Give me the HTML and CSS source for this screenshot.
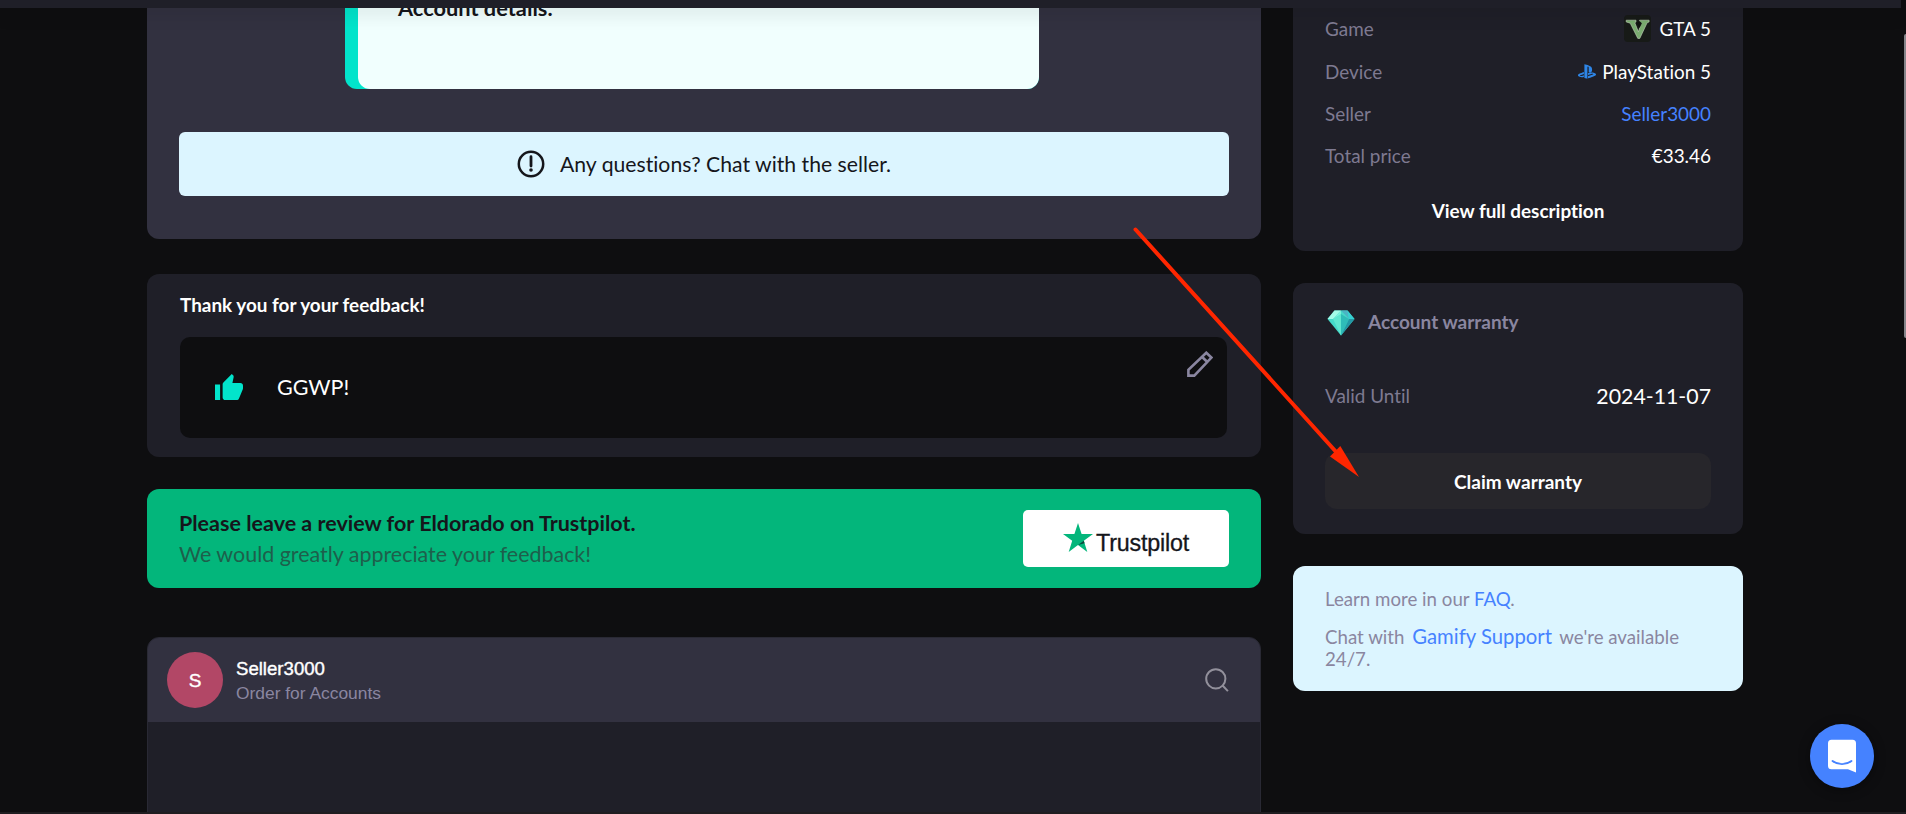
FILE: index.html
```html
<!DOCTYPE html>
<html lang="en">
<head>
<meta charset="utf-8">
<title>Order details</title>
<link rel="stylesheet" href="styles.css">
</head>
<body>
<header class="topbar"></header>
<div class="layout">
  <main class="main">
    <section class="card order">
      <div class="details"><span class="details-title">Account details.</span></div>
      <div class="notice">
        <svg width="28" height="28" viewBox="0 0 28 28" fill="none" stroke="#15161b" stroke-width="2.5"><circle cx="14" cy="14" r="12.2"/><path d="M14 6.7v9.3" stroke-width="2.8" stroke-linecap="round"/><circle cx="14" cy="20" r="1.8" fill="#15161b" stroke="none"/></svg>
        <span class="notice-text">Any questions? Chat with the seller.</span>
      </div>
    </section>

    <section class="card feedback">
      <h2 class="feedback-title">Thank you for your feedback!</h2>
      <div class="comment">
        <svg class="thumb" width="28" height="26" viewBox="1 1 22 20" preserveAspectRatio="none" fill="#02e4cb"><path d="M1 21h4V9H1v12zm22-11c0-1.100-.9-2-2-2h-6.310l.95-4.570.03-.32c0-.41-.17-.79-.44-1.060L14.170 1 7.590 7.590C7.220 7.950 7 8.450 7 9v10c0 1.100.9 2 2 2h9c.83 0 1.540-.5 1.840-1.220l3.020-7.050c.09-.23.14-.47.14-.73v-2z"/></svg>
        <span class="comment-text">GGWP!</span>
        <svg class="pencil" width="26" height="26" viewBox="0 0 26 26" fill="none" stroke="#8a86a0" stroke-width="2.600"><path d="M1.400 24.600v-5.800L19.300 1.700l5.100 4.900L7.300 24.600zM14.900 5.700l5.400 5.300"/></svg>
      </div>
    </section>

    <section class="card review">
      <div>
        <p class="review-title">Please leave a review for Eldorado on Trustpilot.</p>
        <p class="review-sub">We would greatly appreciate your feedback!</p>
      </div>
      <a class="trustpilot">
        <svg width="30" height="29" viewBox="0 0 30 29"><path fill="#03b67b" d="M15 0l3.600 11H30l-9.200 6.800L24.300 29 15 22l-9.300 7 3.500-11.200L0 11h11.400z"/><path fill="#0b4a3c" d="M21.600 20.300l-.8-2.500L15 22z"/></svg>
        <span class="trustpilot-name">Trustpilot</span>
      </a>
    </section>

    <section class="chat">
      <div class="chat-head">
        <span class="avatar">S</span>
        <div class="chat-id">
          <span class="chat-name">Seller3000</span>
          <span class="chat-sub">Order for Accounts</span>
        </div>
        <svg class="search" width="24" height="24" viewBox="0 0 24 24" fill="none" stroke="#92909b" stroke-width="2"><circle cx="10.800" cy="10.800" r="9.600"/><path d="M17.300 17.300l5.600 5.800"/></svg>
      </div>
    </section>
  </main>

  <aside class="side">
    <section class="card summary">
      <div class="row tall"><span class="label">Game</span>
        <span class="value">
          <svg class="gta" width="27" height="27" viewBox="0 0 27 27"><rect width="27" height="27" rx="4" fill="#171a17"/><path d="M2.200 5.200H12v1.700l-1.200.9 3.600 9 2.900-9-1.700-.9V5.200h9.500v1.700l-2 .9-7.300 15.600h-2L6.200 8.200l-4-1.300z" fill="#7aac70" stroke="#c3d2ba" stroke-width=".6"/><path d="M12.500 8.200l3-2.200 2.400 2.200-2.300 4.800z" fill="#101310"/></svg>
          <span>GTA 5</span></span></div>
      <div class="row tall"><span class="label">Device</span>
        <span class="value">
          <svg class="ps" width="18" height="15" viewBox="0 0 18 15" fill="#2e86e8"><path d="M6.400 0.300v13.600l3 .9V3.400c0-.6.300-.9.700-.8.500.2.600.6.600 1.200v4.500c1.900.9 3.400 0 3.400-2.500 0-2.500-.9-3.600-3.500-4.400C9.500.9 7.700.4 6.400.3z"/><path d="M10 12.200l4.800-1.700c.6-.2.600-.5.100-.7-.5-.2-1.100-.1-1.700.1L10 11V9.200c2-.7 4.300-.8 6.300-.1 2 .6 2.200 1.600 1.200 2.300-.9.700-7.500 2.900-7.500 2.900zM1.600 12.800C-.5 12.200-.4 11 .5 10.300c.9-.6 5.400-2.200 5.400-2.200V10l-3.500 1.300c-.6.200-.7.500-.1.700.5.200 1.100.1 1.700-.1l1.900-.7v1.700c-1.500.3-2.800.4-4.300-.1z"/></svg>
          <span>PlayStation 5</span></span></div>
      <div class="row"><span class="label">Seller</span><a class="value link">Seller3000</a></div>
      <div class="row"><span class="label">Total price</span><span class="value">€33.46</span></div>
      <a class="full">View full description</a>
    </section>

    <section class="card warranty">
      <div class="warranty-head">
        <svg width="28" height="26" viewBox="0 0 28 26"><path d="M7.500 0.500h13L27.500 9 14 25.500.5 9z" fill="#45d9c8"/><path d="M7.500.5H14L6 9H.5z" fill="#a5fbe8"/><path d="M14 .5h6.500L22 9z" fill="#4bb4c4"/><path d="M20.500.5l7 8.500H22z" fill="#36cfd2"/><path d="M6 9l8-5v21.500z" fill="#5fe6cf"/><path d="M14 4l8 5-8 16.500z" fill="#2ebcb8"/><path d="M6 9l8-8.500V4z" fill="#7df2dd"/><path d="M22 9h5.500L14 25.500z" fill="#2398a5"/></svg>
        <h3 class="warranty-title">Account warranty</h3>
      </div>
      <div class="valid"><span class="label">Valid Until</span><span class="date">2024-11-07</span></div>
      <a class="claim">Claim warranty</a>
    </section>

    <section class="card help">
      <p class="help-line">Learn more in our <a class="link">FAQ</a>.</p>
      <p class="help-line second">Chat with <a class="link support">Gamify Support</a> we're available 24/7.</p>
    </section>
  </aside>
</div>

<svg class="arrow" width="240" height="260" viewBox="1130 220 240 260"><path d="M1135.500 229.500L1338 454" stroke="#ff2600" stroke-width="4" stroke-linecap="round"/><path d="M1340.300 446L1359 477l-29-20.500z" fill="#ff2600"/></svg>
<a class="fab"><svg width="30" height="34" viewBox="0 0 30 34"><path d="M4.500.7h21a3.500 3.500 0 0 1 3.500 3.500V33.500L21 30.200H4.500A3.500 3.500 0 0 1 1 26.700V4.200A3.500 3.500 0 0 1 4.500.7z" fill="#fff"/><path d="M5.500 22c5.600 4.200 13.400 4.200 19 0" fill="none" stroke="#4582ff" stroke-width="1.900" stroke-linecap="round"/></svg></a>
<span class="scroll"></span>
<footer class="edge"></footer>
</body>
</html>
```
FILE: styles.css
```css
* { box-sizing: border-box; margin: 0; padding: 0; }
body {
  width: 1906px; height: 814px; overflow: hidden; position: relative;
  background: #0e0e10; color: #fff; font-variant-ligatures: none;
  font-family: Lato, "Open Sans", sans-serif; font-size: 18.900px; line-height: 24px;
}
svg { display: block; flex: none; }
span, a, h2, h3, .review-title, .review-sub { white-space: nowrap; }

.topbar {
  position: absolute; z-index: 2; top: 0; left: 0; width: 1901px; height: 8px;
  background: #1f1f28; box-shadow: 0 3px 20px rgba(0, 0, 0, .18);
}
.layout {
  display: grid; grid-template-columns: 1114px 450px; column-gap: 32px;
  height: 814px; padding-left: 147px; overflow: hidden;
}
.card { border-radius: 12px; background: #1f1f28; }
.label { color: #7e7a91; }
.link { color: #4582ff; }

/* Order */
.order { height: 239px; padding: 0 32px; background: #323140; border-top-left-radius: 0; border-top-right-radius: 0; }
.details {
  width: 694px; height: 89px; margin-left: 166px; padding-left: 13px;
  background: #02e4cb; border-radius: 0 0 12px 12px; overflow: hidden;
}
.details-title {
  display: block; height: 89px; padding-left: 40px; border-radius: 0 0 0 12px;
  background: #f1fffe; color: #15161b; font-size: 21.800px; font-weight: 700; line-height: 16px;
}
.notice {
  display: flex; align-items: center; justify-content: center; gap: 15px;
  height: 64px; margin-top: 43px;
  background: #dcf5ff; border-radius: 6px; color: #15161b;
}
.notice-text { font-size: 21.200px; }

/* Feedback */
.feedback { height: 183px; margin-top: 35px; padding: 19px 34px 0 33px; }
.feedback-title { font-size: 18.900px; font-weight: 700; line-height: 24px; }
.comment {
  display: flex; align-items: center; position: relative; height: 101px; margin-top: 20px;
  padding: 0 0 2px 35px; background: #0e0e10; border-radius: 10px;
}
.comment-text { margin-left: 34px; font-size: 21.500px; }
.pencil { position: absolute; right: 14px; top: 14px; }

/* Review */
.review {
  display: flex; align-items: center; justify-content: space-between; height: 99px;
  margin-top: 32px; padding: 0 32px; background: #03b67b;
}
.review-title { color: #15161b; font-size: 21.500px; font-weight: 700; line-height: 31px; }
.review-sub { color: #1e5f4b; font-size: 21.450px; line-height: 31px; }
.trustpilot {
  display: flex; justify-content: center; gap: 3px; width: 206px; height: 57px; padding-top: 13px;
  background: #fff; border-radius: 5px; color: #15161b;
  font-family: "Liberation Sans", Arial, sans-serif; font-size: 23.300px;
}
.trustpilot-name { line-height: 40px; letter-spacing: -.2px; -webkit-text-stroke: .3px #15161b; }

/* Chat */
.chat {
  height: 190px; margin-top: 49px; overflow: hidden; background: #1f1f28;
  border: 1px solid #292934; border-radius: 12px 12px 0 0;
  font-family: "Liberation Sans", Arial, sans-serif;
}
.chat-head { display: flex; align-items: center; height: 84px; padding: 0 31px 0 19px; background: #323140; }
.avatar {
  width: 56px; height: 56px; border-radius: 50%; background: #b24766;
  font-size: 19px; line-height: 57px; text-align: center; -webkit-text-stroke: .4px #fff;
}
.chat-id { display: flex; flex-direction: column; margin-left: 13px; padding-top: 2px; }
.chat-name { font-size: 18.600px; line-height: 25px; -webkit-text-stroke: .4px #fff; }
.chat-sub { color: #8a86a0; font-size: 17.400px; line-height: 25px; }
.search { margin-left: auto; }

/* Order summary */
.summary { height: 251px; padding: 7px 32px 0; border-top-left-radius: 0; border-top-right-radius: 0; }
.row { display: flex; align-items: center; justify-content: space-between; height: 42px; }
.row.tall { height: 43px; }
.value { display: flex; align-items: center; }
.gta { margin-right: 8px; }
.ps { margin-right: 6px; }
.full { display: block; margin-top: 22px; text-align: center; font-weight: 700; }

/* Warranty */
.warranty { height: 251px; margin-top: 32px; padding: 27px 32px 0; }
.warranty-head { display: flex; align-items: center; gap: 13px; height: 26px; padding-left: 2px; }
.warranty-title { padding-bottom: 2px; color: #8a86a0; font-size: 19px; font-weight: 700; }
.valid { display: flex; align-items: center; justify-content: space-between; height: 30px; margin-top: 45px; }
.date { font-size: 21.300px; }
.claim {
  display: block; height: 56px; margin-top: 42px; background: #27262b; border-radius: 12px;
  font-size: 19px; font-weight: 700; line-height: 57px; text-align: center;
}

/* Help */
.help { height: 125px; margin-top: 32px; padding: 22px 32px 0; background: #dcf5ff; color: #8a86a0; }
.help-line { font-size: 18.700px; line-height: 22.500px; }
.second { margin-top: 14px; }
.support { margin: 0 3px; font-size: 20.300px; line-height: 22px; }

/* Overlays */
.arrow { position: absolute; left: 1130px; top: 220px; }
.fab {
  display: flex; align-items: center; justify-content: center; position: absolute;
  left: 1810px; top: 723.5px; width: 64px; height: 64px; border-radius: 50%; background: #4582ff;
  box-shadow: 0 2px 12px rgba(0, 0, 0, .4);
}
.scroll { position: absolute; left: 1904px; top: 34px; width: 4px; height: 304px; background: #85858a; border-radius: 2px; }
.edge { position: absolute; left: 0; bottom: 0; width: 100%; height: 2px; background: #1f1d20; }
```
